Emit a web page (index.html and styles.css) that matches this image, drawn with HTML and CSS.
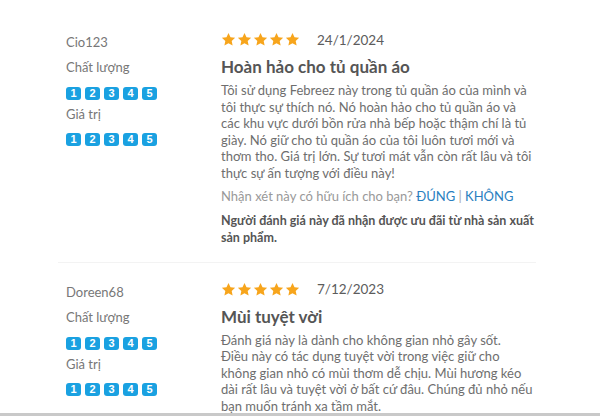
FILE: index.html
```html
<!DOCTYPE html>
<html lang="vi">
<head>
    <meta charset="UTF-8">
    <meta name="viewport" content="width=device-width, initial-scale=1.0">
    <title>Đánh giá</title>
    <link rel="stylesheet" href="styles.css">
</head>
<body>

    <div class="reviews">

        <div class="review">
            <div class="reviewer">
                <p class="name">Cio123</p>
                <p class="label">Chất lượng</p>
                <div class="badges">
                    <span>1</span><span>2</span><span>3</span><span>4</span><span>5</span>
                </div>
                <p class="label label-2">Giá trị</p>
                <div class="badges">
                    <span>1</span><span>2</span><span>3</span><span>4</span><span>5</span>
                </div>
            </div>

            <div class="content">
                <div class="top-row">
                    <div class="stars">
                        <svg viewBox="0 0 24 24"><path d="M12 1.5l3.2 6.9 7.4.8-5.5 5.1 1.5 7.4L12 17.9l-6.6 3.8 1.5-7.4-5.5-5.1 7.4-.8z"/></svg>
                        <svg viewBox="0 0 24 24"><path d="M12 1.5l3.2 6.9 7.4.8-5.5 5.1 1.5 7.4L12 17.9l-6.6 3.8 1.5-7.4-5.5-5.1 7.4-.8z"/></svg>
                        <svg viewBox="0 0 24 24"><path d="M12 1.5l3.2 6.9 7.4.8-5.5 5.1 1.5 7.4L12 17.9l-6.6 3.8 1.5-7.4-5.5-5.1 7.4-.8z"/></svg>
                        <svg viewBox="0 0 24 24"><path d="M12 1.5l3.2 6.9 7.4.8-5.5 5.1 1.5 7.4L12 17.9l-6.6 3.8 1.5-7.4-5.5-5.1 7.4-.8z"/></svg>
                        <svg viewBox="0 0 24 24"><path d="M12 1.5l3.2 6.9 7.4.8-5.5 5.1 1.5 7.4L12 17.9l-6.6 3.8 1.5-7.4-5.5-5.1 7.4-.8z"/></svg>
                    </div>
                    <span class="date">24/1/2024</span>
                </div>
                <h2 class="title">Hoàn hảo cho tủ quần áo</h2>
                <p class="text">Tôi sử dụng Febreez này trong tủ quần áo của mình và tôi thực sự thích nó. Nó hoàn hảo cho tủ quần áo và các khu vực dưới bồn rửa nhà bếp hoặc thậm chí là tủ giày. Nó giữ cho tủ quần áo của tôi luôn tươi mới và thơm tho. Giá trị lớn. Sự tươi mát vẫn còn rất lâu và tôi thực sự ấn tượng với điều này!</p>
                <p class="helpful">Nhận xét này có hữu ích cho bạn? <a href="#">ĐÚNG</a> <span class="sep">|</span> <a href="#">KHÔNG</a></p>
                <p class="incentive">Người đánh giá này đã nhận được ưu đãi từ nhà sản xuất sản phẩm.</p>
            </div>
        </div>

        <div class="review">
            <div class="reviewer">
                <p class="name">Doreen68</p>
                <p class="label">Chất lượng</p>
                <div class="badges">
                    <span>1</span><span>2</span><span>3</span><span>4</span><span>5</span>
                </div>
                <p class="label label-2">Giá trị</p>
                <div class="badges">
                    <span>1</span><span>2</span><span>3</span><span>4</span><span>5</span>
                </div>
            </div>

            <div class="content">
                <div class="top-row">
                    <div class="stars">
                        <svg viewBox="0 0 24 24"><path d="M12 1.5l3.2 6.9 7.4.8-5.5 5.1 1.5 7.4L12 17.9l-6.6 3.8 1.5-7.4-5.5-5.1 7.4-.8z"/></svg>
                        <svg viewBox="0 0 24 24"><path d="M12 1.5l3.2 6.9 7.4.8-5.5 5.1 1.5 7.4L12 17.9l-6.6 3.8 1.5-7.4-5.5-5.1 7.4-.8z"/></svg>
                        <svg viewBox="0 0 24 24"><path d="M12 1.5l3.2 6.9 7.4.8-5.5 5.1 1.5 7.4L12 17.9l-6.6 3.8 1.5-7.4-5.5-5.1 7.4-.8z"/></svg>
                        <svg viewBox="0 0 24 24"><path d="M12 1.5l3.2 6.9 7.4.8-5.5 5.1 1.5 7.4L12 17.9l-6.6 3.8 1.5-7.4-5.5-5.1 7.4-.8z"/></svg>
                        <svg viewBox="0 0 24 24"><path d="M12 1.5l3.2 6.9 7.4.8-5.5 5.1 1.5 7.4L12 17.9l-6.6 3.8 1.5-7.4-5.5-5.1 7.4-.8z"/></svg>
                    </div>
                    <span class="date">7/12/2023</span>
                </div>
                <h2 class="title">Mùi tuyệt vời</h2>
                <p class="text">Đánh giá này là dành cho không gian nhỏ gây sốt.<br>
                    Điều này có tác dụng tuyệt vời trong việc giữ cho<br>
                    không gian nhỏ có mùi thơm dễ chịu. Mùi hương kéo<br>
                    dài rất lâu và tuyệt vời ở bất cứ đâu. Chúng đủ nhỏ nếu<br>
                    bạn muốn tránh xa tầm mắt.</p>
            </div>
        </div>

    </div>

    <div class="scroll-bar"></div>

</body>
</html>
```

FILE: styles.css
```css
*{
    margin: 0;
    padding: 0;
    box-sizing: border-box;
}

body{
    background-color: #ffffff;
    font-family: Lato, "Open Sans", sans-serif;
    color: #707070;
}

.reviews{
    margin-left: 58px;
    width: 478px;
    padding-top: 11px;
}

.review{
    display: flex;
    padding: 22px 0 16px 8px;
    border-bottom: 1px solid #f3f3f3;
}

.review + .review{
    padding-top: 20px;
}

.reviewer{
    width: 155px;
    flex-shrink: 0;
}

.name{
    font-size: 13px;
    line-height: 18px;
    color: #777;
}

.label{
    font-size: 13px;
    line-height: 18px;
    margin-top: 7px;
    margin-bottom: 11px;
    color: #777;
}

.label-2{
    margin-top: 5px;
    margin-bottom: 10px;
}

.badges{
    display: flex;
    gap: 4px;
}

.badges span{
    width: 15px;
    height: 13px;
    border-radius: 3px;
    background-color: #1aa1e1;
    color: white;
    font-family: "Liberation Sans", Arial, sans-serif;
    font-size: 11px;
    font-weight: bold;
    line-height: 13px;
    text-align: center;
}

.content{
    flex: 1;
}

.top-row{
    display: flex;
    align-items: center;
    gap: 17px;
    height: 13px;
}

.stars{
    display: flex;
    gap: 1px;
}

.stars svg{
    width: 15px;
    height: 15px;
    fill: #f7a51c;
}

.date{
    font-size: 13.5px;
    color: #5c5c5c;
}

.title{
    font-size: 17px;
    font-weight: bold;
    color: #555;
    line-height: 22px;
    margin-top: 10px;
}

.text{
    font-size: 13px;
    line-height: 16.6px;
    margin-top: 4px;
    color: #6e6e6e;
}

.helpful{
    font-size: 13px;
    line-height: 17px;
    margin-top: 6px;
    color: #999;
}

.helpful a{
    color: #2a7fbf;
    text-decoration: none;
}

.sep{
    color: #aaa;
}

.incentive{
    font-size: 12.5px;
    font-weight: bold;
    line-height: 17px;
    margin-top: 7px;
    color: #555;
}

.scroll-bar{
    position: fixed;
    left: 0;
    bottom: 0;
    width: 100%;
    height: 3px;
    background-color: #c9c9c9;
}
```
